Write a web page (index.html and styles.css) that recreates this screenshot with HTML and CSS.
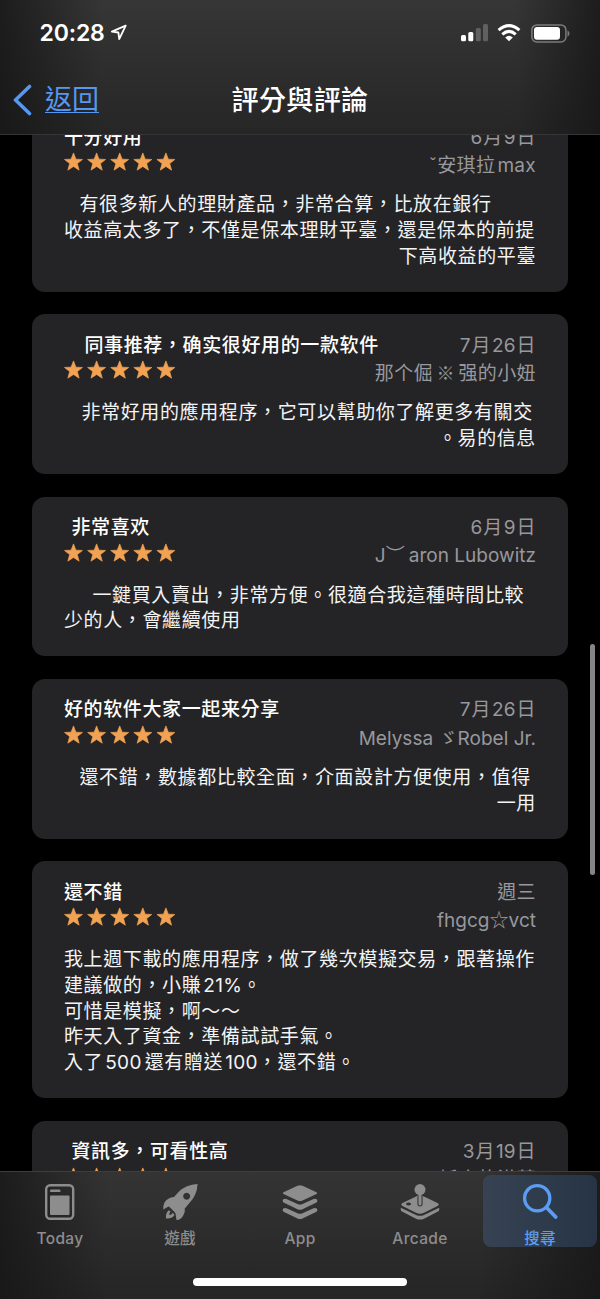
FILE: index.html
```html
<!DOCTYPE html>
<html lang="zh-Hant">
<head>
<meta charset="utf-8">
<title>評分與評論</title>
<link rel="stylesheet" href="styles.css">
</head>
<body>
<svg width="0" height="0" class="defs">
  <symbol id="stars" viewBox="0 0 111 20">
    <g id="row">
      <path id="s" d="M9.4 .9 11.8 7.1 18.3 7.4 13.2 11.5 15 18 9.4 14.3 3.8 18 5.6 11.5 .5 7.4 7 7.1Z"/>
      <use href="#s" x="22.9"/><use href="#s" x="45.8"/><use href="#s" x="68.7"/><use href="#s" x="91.6"/>
    </g>
  </symbol>
</svg>
<div class="phone">
  <header class="top">
    <div class="status">
      <span class="time">20:28</span>
      <svg class="loc" width="18" height="18" viewBox="0 0 18 18"><path d="M15.7 1.6 1.8 7.6 8.4 8.5 9.2 15.2Z"/></svg>
      <svg class="signal" width="28" height="18" viewBox="0 0 28 18"><rect x="0" y="11" width="5" height="6.3" rx="1.5"/><rect x="7.3" y="8" width="5" height="9.3" rx="1.5"/><rect class="off" x="14.8" y="4" width="5" height="13.3" rx="1.5"/><rect class="off" x="22" y="0" width="5" height="17.3" rx="1.5"/></svg>
      <svg class="wifi" width="24" height="18" viewBox="0 0 24 18"><path d="M1.6 6.2Q12-3 22.4 6.2M5.3 10.3Q12 4.4 18.7 10.3"/><path class="dot" d="M12 17.2 8.2 13.4Q12 10.2 15.8 13.4Z"/></svg>
      <svg class="battery" width="39" height="19" viewBox="0 0 39 19"><rect class="shell" x=".9" y=".9" width="34" height="17" rx="5"/><rect x="3" y="3" width="26" height="12.8" rx="3"/><path class="nub" d="M36.5 6.3Q38.5 7.5 38.5 9.5T36.5 12.7Z"/></svg>
    </div>
    <nav class="nav">
      <a class="back"><svg width="20" height="32" viewBox="0 0 20 32"><path d="M16.5 2.5 2.5 16 16.5 29.5"/></svg><span>返回</span></a>
      <h1>評分與評論</h1>
    </nav>
  </header>

  <main class="scroll">
    <div class="list">
      <article class="card">
        <div class="head">
          <div class="lead"><h2>十分好用</h2><svg class="stars"><use href="#stars"/></svg></div>
          <div class="meta"><p><span class="n">6</span>月<span class="n">9</span>日</p><p>ˇ安琪拉<span class="latin">max</span></p></div>
        </div>
        <div class="body"><p class="in15">有很多新人的理財產品，非常合算，比放在銀行</p><p>收益高太多了，不僅是保本理財平臺，還是保本的前提</p><p class="end">下高收益的平臺</p></div>
      </article>

      <article class="card">
        <div class="head">
          <div class="lead"><h2 class="in20">同事推荐，确实很好用的一款软件</h2><svg class="stars"><use href="#stars"/></svg></div>
          <div class="meta"><p><span class="n">7</span>月<span class="n">26</span>日</p><p>那个倔<span class="ref">※</span>强的小妞</p></div>
        </div>
        <div class="body"><p class="in17">非常好用的應用程序，它可以幫助你了解更多有關交</p><p class="end">。易的信息</p></div>
      </article>

      <article class="card">
        <div class="head">
          <div class="lead"><h2 class="in7">非常喜欢</h2><svg class="stars"><use href="#stars"/></svg></div>
          <div class="meta"><p><span class="n">6</span>月<span class="n">9</span>日</p><p class="lat">J<span class="arc">︶</span>aron Lubowitz</p></div>
        </div>
        <div class="body"><p class="in28">一鍵買入賣出，非常方便。很適合我這種時間比較</p><p>少的人，會繼續使用</p></div>
      </article>

      <article class="card">
        <div class="head">
          <div class="lead"><h2>好的软件大家一起来分享</h2><svg class="stars"><use href="#stars"/></svg></div>
          <div class="meta"><p><span class="n">7</span>月<span class="n">26</span>日</p><p class="lat">Melyssa ゞRobel Jr.</p></div>
        </div>
        <div class="body"><p class="in15">還不錯，數據都比較全面，介面設計方便使用，值得</p><p class="end">一用</p></div>
      </article>

      <article class="card">
        <div class="head">
          <div class="lead"><h2>還不錯</h2><svg class="stars"><use href="#stars"/></svg></div>
          <div class="meta"><p>週三</p><p class="lat">fhgcg<span class="wide">☆</span>vct</p></div>
        </div>
        <div class="body"><p>我上週下載的應用程序，做了幾次模擬交易，跟著操作</p><p>建議做的，小賺<span class="latin">21%</span>。</p><p>可惜是模擬，啊～～</p><p>昨天入了資金，準備試試手氣。</p><p>入了<span class="latin amount">500</span>還有贈送<span class="latin">100</span>，還不錯。</p></div>
      </article>

      <article class="card">
        <div class="head">
          <div class="lead"><h2 class="in7">資訊多，可看性高</h2><svg class="stars"><use href="#stars"/></svg></div>
          <div class="meta"><p><span class="n">3</span>月<span class="n">19</span>日</p><p>抵小的洪葉</p></div>
        </div>
      </article>
    </div>
    <div class="thumb"></div>
  </main>

  <footer class="tabs">
    <div class="row">
      <div class="tab"><svg width="40" height="40" viewBox="0 0 40 40"><rect x="6.2" y="3.2" width="27" height="33.600" rx="4" fill="none" stroke="currentColor" stroke-width="2.4"/><rect x="10" y="7.5" width="10.5" height="2.6" rx="1.2"/><rect x="10" y="13.5" width="19.5" height="19.5" rx="1"/></svg><span>Today</span></div>
      <div class="tab"><svg width="40" height="40" viewBox="0 0 40 40"><path fill-rule="evenodd" d="M37.6 2Q26 2.5 18.5 10L14 15Q7.500 15.500 4.500 20.500Q3 23.500 3.300 27.500L8.500 24.500Q9.500 24.500 10.500 26L14 29.500Q16 31 15.700 33L16.500 38Q20 38.500 23 34Q25.500 30.500 24.800 26.500L29 21.500Q37 13.500 37.600 2ZM26.700 10.800A3.500 3.500 0 1 1 26.600 10.800Z"/><path d="M8.800 28.200Q5.500 30.500 6 36.500Q12.500 37 14.500 32.800L12.600 30.800Q11.500 33.200 9.300 33Q9 30.800 10.600 29.500Z"/></svg><span>遊戲</span></div>
      <div class="tab"><svg width="40" height="40" viewBox="0 0 40 40"><path d="M20 3.200Q21 3.200 22.500 3.800L36.500 10.300Q37.800 11.200 36.500 12.100L22.500 18.500Q20 19.500 17.500 18.500L3.500 12.100Q2.200 11.200 3.500 10.300L17.500 3.800Q19 3.200 20 3.200Z"/><path id="layer" d="M2.900 17.500Q5 16.200 7 17.200L17.500 22Q20 23 22.500 22L33 17.200Q35 16.200 37.100 17.500Q37.900 19.500 36.500 20.500L22.500 27.300Q20 28.400 17.500 27.300L3.500 20.500Q2.100 19.500 2.900 17.500Z"/><use href="#layer" y="9.200"/></svg><span>App</span></div>
      <div class="tab"><svg width="40" height="40" viewBox="0 0 40 40"><path fill-rule="evenodd" d="M17.900 13.500V22.500Q20 24.500 22.100 22.500V14Q23.500 14.300 25 15L37.500 21Q40 22.500 37.500 24L24 30.800Q20 32.500 16 30.800L2.500 24Q0 22.500 2.500 21L15 15Q16.500 14.200 17.900 13.500ZM8.500 20.400A2.500 1.500 0 1 0 8.600 20.400Z"/><path d="M.8 25.700 16 33Q20 34.700 24 33L39.200 25.700V28Q39 29 37.500 29.700L24 36.700Q20 38.500 16 36.700L2.500 29.700Q1 29 .8 28Z"/><circle cx="20" cy="7.600" r="5.500"/><path class="gap" d="M17.500 14.500V23Q20 26 22.500 23V14.500"/><rect x="18.500" y="11" width="3" height="12.500" rx="1.500"/></svg><span>Arcade</span></div>
      <div class="tab active"><svg width="40" height="40" viewBox="0 0 40 40" fill="none" stroke="currentColor" stroke-width="3.300" stroke-linecap="round"><circle cx="17.200" cy="16.200" r="12.600"/><path d="M26.500 25.500 35.700 35" stroke-width="3.800"/></svg><span>搜尋</span></div>
    </div>
    <div class="home"></div>
  </footer>
</div>
</body>
</html>
```
FILE: styles.css
```css
* { box-sizing: border-box; }
body, h1, h2, p { margin: 0; }
body {
  background: #000;
  color: #fff;
  font-family: Inter, "Noto Sans CJK TC", sans-serif;
}
.defs { position: absolute; }
.phone { width: 600px; height: 1299px; overflow: hidden; display: flex; flex-direction: column; }

.top {
  height: 135px;
  flex: none;
  background: linear-gradient(90deg, rgba(20,20,20,.75), transparent 17%, transparent 86%, rgba(20,20,20,.75)), linear-gradient(#363637, #262627);
  border-bottom: 1px solid #353537;
}
.status { height: 66px; padding: 0 30px 0 39.5px; display: flex; align-items: center; fill: #fff; }
.time { font-size: 23px; font-weight: 600; letter-spacing: -.15px; }
.loc { margin-left: 5px; fill: none; stroke: #fff; stroke-width: 1.8; stroke-linejoin: round; }
.signal { margin-left: auto; }
.signal .off { fill: #606061; }
.wifi { margin: 0 10px 0 8px; }
.wifi path { fill: none; stroke: #fff; stroke-width: 3; }
.wifi .dot { fill: #fff; stroke: none; }
.battery .shell { fill: none; stroke: #7b7b7c; stroke-width: 1.5; }
.battery .nub { fill: #7b7b7c; }
.nav { height: 67px; padding: 0 13px; display: grid; grid-template-columns: 1fr auto 1fr; align-items: center; }
.back { display: flex; align-items: center; gap: 12px; color: #5797ef; font-size: 27px; text-decoration: none; }
.back span { line-height: 27px; border-bottom: 1.5px solid #5797ef; height: 27px; }
.back svg { fill: none; stroke: #5797ef; stroke-width: 3.6; stroke-linecap: round; stroke-linejoin: round; }
h1 { font-size: 27px; line-height: 40px; font-weight: 500; letter-spacing: .4px; padding-top: 2px; }

.scroll { height: 1036px; flex: none; overflow: hidden; position: relative; }
.list { margin-top: -28.6px; padding: 0 32px; display: flex; flex-direction: column; gap: 22.6px; }
.card { background: #242426; border-radius: 13px; padding: 18.4px 32px 22.3px; }
.head { display: flex; justify-content: space-between; height: 67.6px; white-space: nowrap; }
.lead { flex: 1 1 0; min-width: 0; }
h2 { font-size: 19px; font-weight: 500; line-height: 26px; letter-spacing: .62px; }
.stars { display: block; width: 112px; height: 20.2px; margin: 1.5px 0 0 -.5px; fill: #f2a253; stroke: #f2a253; stroke-width: .7; stroke-linejoin: round; }
.meta { color: #98989d; font-size: 19px; line-height: 28.2px; letter-spacing: .4px; text-align: right; margin-top: -1px; }
.body { font-size: 19px; line-height: 25.7px; letter-spacing: .62px; white-space: nowrap; color: #f4f4f5; }
.end { text-align: right; }
.in7 { padding-left: 7.5px; }
.in15 { padding-left: 15.5px; }
.in17 { padding-left: 17.5px; }
.in20 { padding-left: 20.5px; }
.in28 { padding-left: 28.5px; }
.n { margin: 0 1px; letter-spacing: .1px; }
.latin { margin: 0 0 0 2px; letter-spacing: .3px; }
.amount { margin-right: 3px; }
.meta .lat { letter-spacing: .02px; }
.arc { margin-right: 4px; }
.wide { font-family: "Noto Sans CJK TC", sans-serif; font-size: 19px; line-height: 1; }
.ref { font-family: "Noto Sans CJK TC", sans-serif; font-size: 18px; margin: 0 3.5px; line-height: 1; }
.thumb { position: absolute; right: 5px; top: 509px; width: 5px; height: 231px; border-radius: 3px; background: #858587; }

.tabs {
  height: 128px;
  flex: none;
  background: linear-gradient(90deg, rgba(20,20,20,.75), transparent 18%, transparent 80%, rgba(20,20,20,.75)), linear-gradient(#343435, #252526);
  border-top: 1px solid #3d3d3e;
}
.row { display: grid; grid-template-columns: repeat(5, 120px); height: 76px; }
.tab { display: flex; flex-direction: column; align-items: center; color: #8d8d8e; fill: currentColor; font-size: 15.5px; font-weight: 500; letter-spacing: .35px; line-height: 24px; padding-top: 10px; }
.tab svg { flex: none; }
.tab span { margin-top: 5px; }
.gap { fill: #303031; }
.active { color: #5b9df5; background: linear-gradient(90deg, #374353, #263445); height: 72px; margin: 3px 0 0 3px; border-radius: 8px; padding: 7px 0 0; width: 114px; }
.active svg { fill: none; }
.home { width: 214px; height: 8px; border-radius: 4px; background: #fff; margin: 30px auto 0; }
```
